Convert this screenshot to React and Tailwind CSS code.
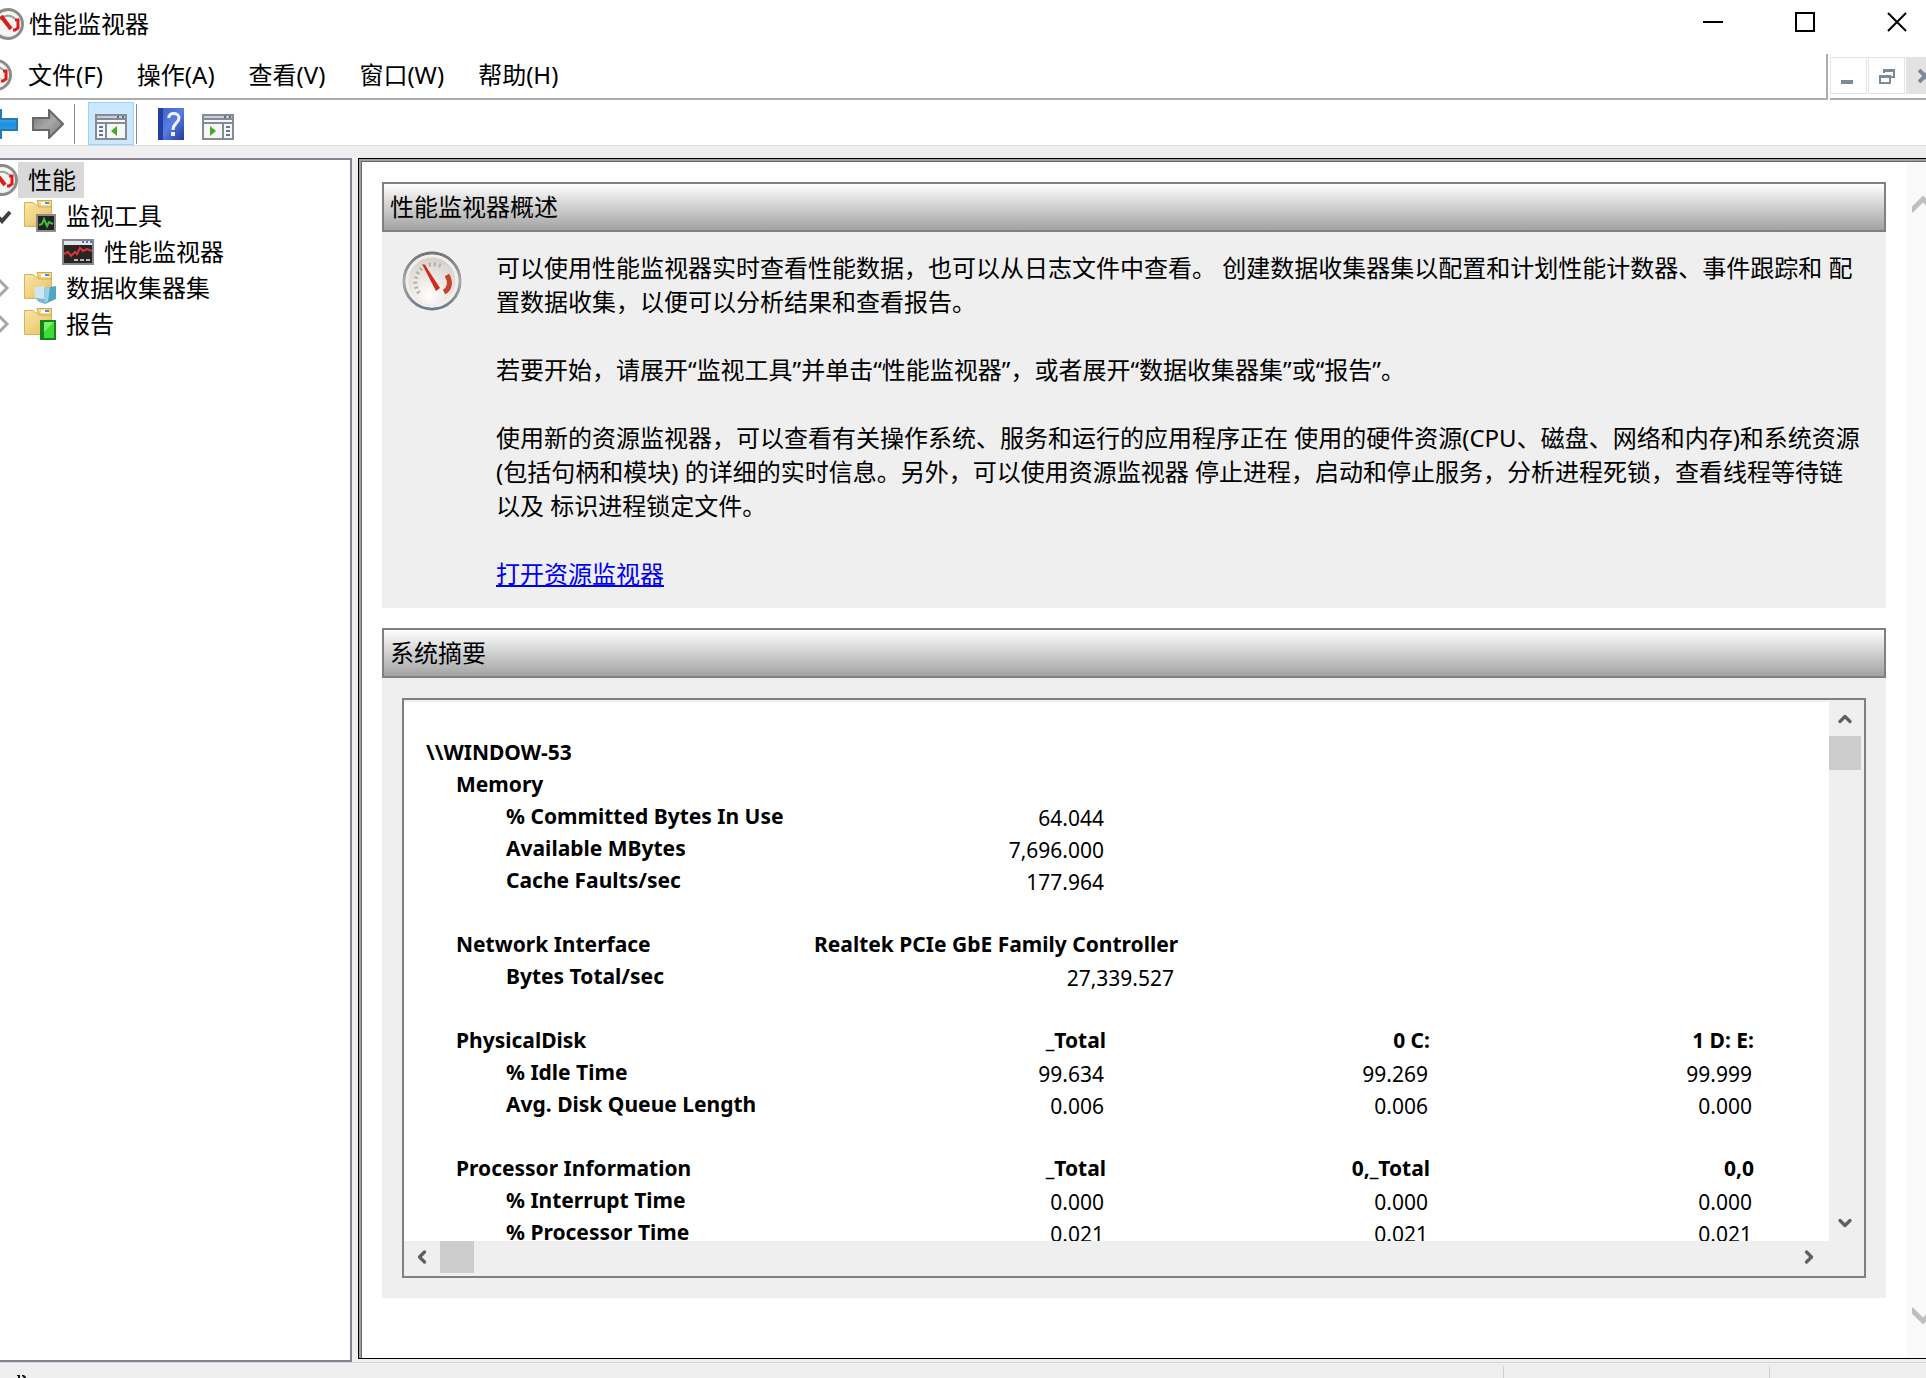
import { useState } from 'react';
import { ChevronDown, ChevronLeft, ChevronRight, ChevronUp } from 'lucide-react';

const MENUS = ['文件(F)', '操作(A)', '查看(V)', '窗口(W)', '帮助(H)'];

const GROUPS = [
  {
    name: 'Memory',
    cols: [],
    rows: [
      ['% Committed Bytes In Use', '64.044'],
      ['Available MBytes', '7,696.000'],
      ['Cache Faults/sec', '177.964'],
    ],
  },
  {
    name: 'PhysicalDisk',
    cols: ['_Total', '0 C:', '1 D: E:'],
    rows: [
      ['% Idle Time', '99.634', '99.269', '99.999'],
      ['Avg. Disk Queue Length', '0.006', '0.006', '0.000'],
    ],
  },
  {
    name: 'Processor Information',
    cols: ['_Total', '0,_Total', '0,0'],
    rows: [
      ['% Interrupt Time', '0.000', '0.000', '0.000'],
      ['% Processor Time', '0.021', '0.021', '0.021'],
    ],
  },
];

function Gauge({ className }) {
  return (
    <svg viewBox="0 0 60 60" className={className} aria-hidden="true">
      <defs>
        <radialGradient id="face" cx="0.45" cy="0.75" r="0.75">
          <stop offset="0" stopColor="#ffffff" />
          <stop offset="0.6" stopColor="#e4e0da" />
          <stop offset="1" stopColor="#cfcac4" />
        </radialGradient>
        <linearGradient id="rim" x1="0" y1="0" x2="0" y2="1">
          <stop offset="0" stopColor="#6f757c" />
          <stop offset="0.5" stopColor="#a9a9a6" />
          <stop offset="1" stopColor="#6d7a88" />
        </linearGradient>
      </defs>
      <circle cx="30" cy="30" r="28" fill="url(#face)" stroke="url(#rim)" strokeWidth="3" />
      <circle cx="30" cy="30" r="25" fill="none" stroke="#f1efeb" strokeWidth="3" />
      <path d="M17 42 A18 18 0 0 1 41 16" fill="none" stroke="#b3b0aa" strokeWidth="4" strokeDasharray="2 3" />
      <path d="M45 24 C49 31 48 38 42 41" fill="none" stroke="#c8402e" strokeWidth="5" />
      <path d="M20 13 L23 14 L38 37 L34 40 Z" fill="#d8281c" />
    </svg>
  );
}

// simplified drawing for the 32px sizes
function SmallGauge({ className }) {
  return (
    <svg viewBox="0 0 32 32" className={className} aria-hidden="true">
      <circle cx="16" cy="16" r="14.5" fill="#f6f5f2" stroke="#8b8b89" strokeWidth="3" />
      <path d="M8 12 C11 7 19 6 23 11" fill="none" stroke="#8fa79a" strokeWidth="2" />
      <path d="M9 8 L19 21" stroke="#dd1b1b" strokeWidth="4" />
      <path d="M23 12 H26 V20 L23 22 H21" fill="none" stroke="#dd1b1b" strokeWidth="3" />
    </svg>
  );
}

function Folder({ children }) {
  return (
    <svg viewBox="0 0 32 32" className="h-8 w-8 shrink-0" aria-hidden="true">
      <defs>
        <linearGradient id="folder" x1="0" y1="0" x2="1" y2="1">
          <stop offset="0" stopColor="#fbe7a6" />
          <stop offset="1" stopColor="#e6bd5e" />
        </linearGradient>
      </defs>
      <path d="M0.5 2.5 H9 L12 5 H27.5 V26.5 H0.5 Z" fill="url(#folder)" stroke="#d9b35c" />
      <path d="M13 0.5 H27.5 V7 H15 Z" fill="#f3d78a" stroke="#d3a950" />
      <rect x="17" y="2" width="8" height="3" fill="#ffffff" />
      <rect x="21" y="2" width="4" height="2" fill="#4d8fd0" />
      {children}
    </svg>
  );
}

function PaneIcon({ flip }) {
  return (
    <svg viewBox="0 0 32 26" className="h-[26px] w-8" aria-hidden="true">
      <rect x="1" y="1" width="30" height="24" fill="#f7f8f5" stroke="#848b95" strokeWidth="2" />
      <rect x="2" y="2" width="28" height="2" fill="#c9d0dc" />
      <path d="M1 5 H31 M1 9 H31" stroke="#848b95" strokeWidth="2" />
      <path d="M22 3 H24 M27 3 H29" stroke="#5c6b80" strokeWidth="2" />
      {flip ? (
        <>
          <path d="M21 9 V25" stroke="#848b95" strokeWidth="2" />
          <path d="M24 13 H28 M24 17 H28 M24 21 H28" stroke="#5877a8" strokeWidth="2" />
          <path d="M8 12 L14 17 L8 22 Z" fill="#3fae2a" />
        </>
      ) : (
        <>
          <path d="M11 9 V25" stroke="#848b95" strokeWidth="2" />
          <path d="M4 13 H8 M4 17 H8 M4 21 H8" stroke="#5877a8" strokeWidth="2" />
          <path d="M22 12 L16 17 L22 22 Z" fill="#3fae2a" />
        </>
      )}
    </svg>
  );
}

function SectionTitle({ children }) {
  return (
    <h2 className="flex h-[50px] items-center border-2 border-[#808080] bg-linear-to-b from-white to-[#a3a3a3] px-[6px] text-2xl">
      {children}
    </h2>
  );
}

function TreeItem({ selected, onSelect, toggle, icon, label, pad }) {
  return (
    <li className={`flex h-9 items-center ${pad}`}>
      {toggle}
      {icon}
      <button
        type="button"
        onClick={onSelect}
        className={`h-9 whitespace-nowrap pr-2 pl-[10px] text-2xl leading-9 ${selected ? 'bg-[#d9d9d9]' : ''}`}
      >
        {label}
      </button>
    </li>
  );
}

function SummaryTable() {
  return (
    <table className="w-[1412px] table-fixed border-collapse text-[21px] leading-8">
      <colgroup>
        <col className="w-[376px]" />
        <col className="w-[304px]" />
        <col className="w-[324px]" />
        <col className="w-[324px]" />
        <col />
      </colgroup>
      <tbody>
        <tr>
          <th colSpan={5} className="h-8 p-0 text-left">\\WINDOW-53</th>
        </tr>
        {GROUPS.map((g, i) => (
          <GroupRows key={g.name} group={g} network={i === 0} />
        ))}
      </tbody>
    </table>
  );
}

function GroupRows({ group, network }) {
  return (
    <>
      <tr>
        <th className="h-8 p-0 pl-[30px] text-left whitespace-nowrap">{group.name}</th>
        {group.cols.map((c) => (
          <th key={c} className="p-0 text-right">{c}</th>
        ))}
      </tr>
      {group.rows.map(([name, ...vals]) => (
        <tr key={name}>
          <th className="h-8 p-0 pl-20 text-left whitespace-nowrap">{name}</th>
          {vals.map((v, i) => (
            <td key={i} className="p-0 pt-1 pr-[2px] text-right leading-7">{v}</td>
          ))}
        </tr>
      ))}
      <tr><td colSpan={5} className="h-8 p-0" /></tr>
      {network && (
        <>
          <tr>
            <th className="h-8 p-0 pl-[30px] text-left whitespace-nowrap">Network Interface</th>
            <th colSpan={2} className="p-0 pl-3 text-left whitespace-nowrap">Realtek PCIe GbE Family Controller</th>
          </tr>
          <tr>
            <th className="h-8 p-0 pl-20 text-left whitespace-nowrap">Bytes Total/sec</th>
            <td colSpan={2} className="p-0 pt-1 pr-[256px] text-right leading-7">27,339.527</td>
          </tr>
          <tr><td colSpan={5} className="h-8 p-0" /></tr>
        </>
      )}
    </>
  );
}

export default function App() {
  const [selected, setSelected] = useState('root');
  const [open, setOpen] = useState(true);
  const item = (id) => ({ selected: selected === id, onSelect: () => setSelected(id) });

  return (
    <div className="flex h-screen flex-col overflow-hidden bg-[#efefef] font-['Noto_Sans','Noto_Sans_CJK_SC',sans-serif] text-black">
      <header className="flex h-12 shrink-0 items-center bg-white">
        <SmallGauge className="-ml-2 h-8 w-8 shrink-0" />
        <h1 className="ml-[5px] text-2xl leading-9">性能监视器</h1>
        <div className="ml-auto flex items-center gap-[72px] pr-[19px] pb-[4px]">
          <button type="button" aria-label="最小化" className="flex h-6 w-5 items-center">
            <span className="h-[2px] w-5 bg-black" />
          </button>
          <button type="button" aria-label="最大化" className="h-5 w-5 border-2 border-black" />
          <button type="button" aria-label="关闭" className="h-5 w-5">
            <svg viewBox="0 0 20 20" className="h-5 w-5"><path d="M1 1 L19 19 M19 1 L1 19" stroke="#000" strokeWidth="2" /></svg>
          </button>
        </div>
      </header>

      <nav className="flex h-[52px] shrink-0 bg-white">
        <div className="flex min-w-0 flex-1 items-center border-b-2 border-[#adadad] pt-1">
          <SmallGauge className="-ml-5 h-8 w-8 shrink-0" />
          <div className="ml-4 flex gap-[34px]">
            {MENUS.map((m) => (
              <button key={m} type="button" className="text-2xl leading-9 whitespace-nowrap">{m}</button>
            ))}
          </div>
        </div>
        <div className="mt-[6px] w-[2px] bg-[#adadad]" />
        <div className="ml-[2px] flex w-24 items-start gap-px overflow-hidden border-b-2 border-[#adadad] pt-[9px]">
          <button type="button" aria-label="最小化子窗口" className="flex h-[37px] w-[37px] shrink-0 items-end justify-center border border-[#e3e3e3] pr-1 pb-[9px]">
            <span className="h-1 w-3 bg-[#7b8a99]" />
          </button>
          <button type="button" aria-label="还原子窗口" className="flex h-[37px] w-[37px] shrink-0 items-center justify-center border border-[#e3e3e3]">
            <svg viewBox="0 0 16 16" className="h-4 w-4" fill="none" stroke="#7b8a99">
              <path d="M5 5 V2 H15 V9 H12" strokeWidth="2" />
              <path d="M4 1 H16 V4 H4 Z" fill="#7b8a99" stroke="none" />
              <rect x="1" y="8" width="10" height="7" strokeWidth="2" />
              <path d="M0 7 H12 V10 H0 Z" fill="#7b8a99" stroke="none" />
            </svg>
          </button>
          <button type="button" aria-label="关闭子窗口" className="flex h-[37px] w-[37px] shrink-0 items-center justify-center bg-[#e3e3e3]">
            <svg viewBox="0 0 14 14" className="h-[14px] w-[14px]"><path d="M1 1 L13 13 M13 1 L1 13" stroke="#7b8a99" strokeWidth="4" /></svg>
          </button>
        </div>
      </nav>

      <div className="flex h-[46px] shrink-0 items-center border-b border-[#dadada] bg-white pt-[2px]">
        <button type="button" aria-label="后退" className="-ml-4 w-[34px]">
          <svg viewBox="0 0 34 30" className="h-[30px] w-[34px]">
            <defs>
              <linearGradient id="back" x1="0" y1="0" x2="0" y2="1">
                <stop offset="0" stopColor="#8fd3f7" />
                <stop offset="0.5" stopColor="#1c8fe0" />
                <stop offset="1" stopColor="#3eb1f0" />
              </linearGradient>
            </defs>
            <path d="M2 15 L17 1 V10 H33 V21 H17 V29 Z" fill="url(#back)" stroke="#2878b8" strokeWidth="2" />
          </svg>
        </button>
        <button type="button" aria-label="前进" className="ml-[14px] w-8">
          <svg viewBox="0 0 32 30" className="h-[30px] w-8">
            <defs>
              <linearGradient id="fwd" x1="0" y1="0" x2="1" y2="1">
                <stop offset="0" stopColor="#6f6f6f" />
                <stop offset="0.5" stopColor="#a8a8a8" />
                <stop offset="1" stopColor="#777777" />
              </linearGradient>
            </defs>
            <path d="M1 9 H17 V1 L31 15 L17 29 V21 H1 Z" fill="url(#fwd)" stroke="#686868" strokeWidth="2" />
          </svg>
        </button>
        <span className="ml-[10px] h-10 w-px bg-[#848b95]" />
        <button type="button" aria-label="显示/隐藏控制台树" className="ml-[13px] flex h-[43px] w-[46px] items-center justify-center border border-[#99d1ff] bg-[#cce8ff] pt-[6px]">
          <PaneIcon />
        </button>
        <span className="ml-[2px] h-10 w-px bg-[#848b95]" />
        <button type="button" aria-label="帮助" className="ml-[21px]">
          <svg viewBox="0 0 26 32" className="h-8 w-[26px]">
            <defs>
              <linearGradient id="help" x1="0" y1="0" x2="1" y2="1">
                <stop offset="0" stopColor="#3a5bc4" />
                <stop offset="0.5" stopColor="#5a7ee0" />
                <stop offset="1" stopColor="#1f3a9c" />
              </linearGradient>
            </defs>
            <rect width="26" height="32" fill="url(#help)" />
            <rect width="5" height="32" fill="#243f9f" />
            <path d="M11 10 C10 4 21 4 21 10 C21 15 15 15 15 22" fill="none" stroke="#eef2ff" strokeWidth="3" />
            <rect x="13" y="24" width="4" height="4" fill="#eef2ff" />
          </svg>
        </button>
        <button type="button" aria-label="显示/隐藏操作窗格" className="ml-[18px] pt-[6px]">
          <PaneIcon flip />
        </button>
      </div>

      <div className="flex min-h-0 flex-1 gap-[6px] pt-3">
        <aside className="w-[352px] shrink-0 border-y-2 border-r-2 border-[#848290] bg-white pt-[2px]">
          <ul>
            <TreeItem {...item('root')} pad="" icon={<SmallGauge className="-ml-[14px] h-8 w-8 shrink-0" />} label="性能" />
            <TreeItem
              {...item('tools')}
              pad=""
              toggle={
                <button type="button" aria-label="展开监视工具" onClick={() => setOpen(!open)} className="-ml-[10px] w-[34px] shrink-0">
                  <svg viewBox="0 0 34 16" className="h-4 w-[34px]" fill="none"><path d="M4 5 L12 13 L20 4" stroke="#404040" strokeWidth="4" /></svg>
                </button>
              }
              icon={
                <Folder>
                  <rect x="13" y="15" width="18" height="16" fill="#262222" stroke="#8d8d8d" strokeWidth="2" />
                  <path d="M15 25 L18 24 L20 19 L23 26 L25 22 L29 24" fill="none" stroke="#35c43a" strokeWidth="2" />
                </Folder>
              }
              label="监视工具"
            />
            {open && (
              <TreeItem
                {...item('perfmon')}
                pad="pl-[62px]"
                icon={
                  <svg viewBox="0 0 32 26" className="h-[26px] w-8 shrink-0" aria-hidden="true">
                    <rect x="1" y="1" width="30" height="24" fill="#2b2423" stroke="#85888f" strokeWidth="2" />
                    <rect x="2" y="2" width="28" height="4" fill="#dfe6ee" />
                    <path d="M20 3 H22 M24 3 H26 M28 3 H30" stroke="#4a78b8" strokeWidth="2" />
                    <path d="M2 15 L6 13 L9 17 L13 13 L15 15 L18 9 L21 12 L25 10 L30 12" fill="none" stroke="#d5383c" strokeWidth="2" />
                    <path d="M12 21 H16 M18 21 H22 M24 21 H28" stroke="#b8b8b8" strokeWidth="2" />
                  </svg>
                }
                label="性能监视器"
              />
            )}
            <TreeItem
              {...item('sets')}
              pad=""
              toggle={
                <button type="button" aria-label="展开数据收集器集" className="w-6 shrink-0">
                  <svg viewBox="0 0 24 18" className="h-[18px] w-6" fill="none"><path d="M-1 1 L7 9 L-1 17" stroke="#a6a6a6" strokeWidth="3" /></svg>
                </button>
              }
              icon={
                <Folder>
                  <path d="M10 15 L20 14 L22 28 L11 26 Z" fill="#cfe6f3" />
                  <path d="M20 16 L32 14 V27 L21 32 Z" fill="#4ea6c6" />
                  <path d="M11 26 L21 27 V32 L15 30 Z" fill="#75b9d6" />
                  <path d="M20 16 L26 15 L24 29 L21 31 Z" fill="#9bd2e6" />
                </Folder>
              }
              label="数据收集器集"
            />
            <TreeItem
              {...item('reports')}
              pad=""
              toggle={
                <button type="button" aria-label="展开报告" className="w-6 shrink-0">
                  <svg viewBox="0 0 24 18" className="h-[18px] w-6" fill="none"><path d="M-1 1 L7 9 L-1 17" stroke="#a6a6a6" strokeWidth="3" /></svg>
                </button>
              }
              icon={
                <Folder>
                  <rect x="16" y="12" width="16" height="20" fill="#14851a" />
                  <rect x="20" y="14" width="10" height="16" fill="#3fdc38" />
                  <path d="M20 14 H30 L20 24 Z" fill="#7bf06a" />
                </Folder>
              }
              label="报告"
            />
          </ul>
        </aside>

        <div className="mb-[3px] flex min-w-0 flex-1 border-y border-l border-black bg-white">
          <div className="flex min-w-0 flex-1 border-t-2 border-l-2 border-[#a0a0a0]">
            <div className="flex min-w-0 flex-1 border-t border-l border-[#696969]">
              <main className="min-w-0 flex-1 px-5 pt-5">
                <section>
                  <SectionTitle>性能监视器概述</SectionTitle>
                  <div className="flex h-[376px] bg-[#efefef] pt-[19px] pl-5">
                    <Gauge className="h-[60px] w-[60px] shrink-0" />
                    <div className="ml-[34px] text-2xl leading-[34px] whitespace-nowrap">
                      <p>
                        可以使用性能监视器实时查看性能数据，也可以从日志文件中查看。 创建数据收集器集以配置和计划性能计数器、事件跟踪和 配<br />
                        置数据收集，以便可以分析结果和查看报告。
                      </p>
                      <p className="mt-[34px]">若要开始，请展开“监视工具”并单击“性能监视器”，或者展开“数据收集器集”或“报告”。</p>
                      <p className="mt-[34px]">
                        使用新的资源监视器，可以查看有关操作系统、服务和运行的应用程序正在 使用的硬件资源(CPU、磁盘、网络和内存)和系统资源<br />
                        (包括句柄和模块) 的详细的实时信息。另外，可以使用资源监视器 停止进程，启动和停止服务，分析进程死锁，查看线程等待链<br />
                        以及 标识进程锁定文件。
                      </p>
                      <p className="mt-[34px]">
                        <a href="#resmon" className="text-[#0000ee] underline">打开资源监视器</a>
                      </p>
                    </div>
                  </div>
                </section>

                <section className="mt-5">
                  <SectionTitle>系统摘要</SectionTitle>
                  <div className="bg-[#efefef] p-5">
                    <div className="flex h-[580px] flex-col border-2 border-[#808080] bg-[#efefef]">
                      <div className="flex min-h-0 flex-1">
                        <div className="mt-[2px] min-w-0 flex-1 overflow-hidden bg-white pt-[34px] pl-[22px]">
                          <SummaryTable />
                        </div>
                        <div className="flex w-[35px] flex-col items-start">
                          <button type="button" aria-label="向上滚动" className="flex h-9 w-8 items-center justify-center pt-[2px]">
                            <ChevronUp size={20} strokeWidth={4} color="#606060" />
                          </button>
                          <span className="h-[34px] w-8 bg-[#cdcdcd]" />
                          <button type="button" aria-label="向下滚动" className="mt-auto flex h-9 w-8 items-center justify-center">
                            <ChevronDown size={20} strokeWidth={4} color="#606060" />
                          </button>
                        </div>
                      </div>
                      <div className="flex h-[35px] items-start pr-[37px]">
                        <button type="button" aria-label="向左滚动" className="flex h-8 w-9 items-center justify-center">
                          <ChevronLeft size={20} strokeWidth={4} color="#606060" />
                        </button>
                        <span className="h-8 w-[34px] bg-[#cdcdcd]" />
                        <button type="button" aria-label="向右滚动" className="ml-auto flex h-8 w-9 items-center justify-center">
                          <ChevronRight size={20} strokeWidth={4} color="#606060" />
                        </button>
                      </div>
                    </div>
                  </div>
                </section>
              </main>
              <div className="flex w-5 shrink-0 flex-col justify-between overflow-hidden bg-[#f9f9f9] pt-8 pb-8 pl-[6px]">
                <button type="button" aria-label="页面向上滚动">
                  <svg viewBox="0 0 24 20" className="h-5 w-6" fill="none"><path d="M-1 17 L11 5 L23 17" stroke="#bfbfbf" strokeWidth="5" /></svg>
                </button>
                <button type="button" aria-label="页面向下滚动">
                  <svg viewBox="0 0 24 20" className="h-5 w-6" fill="none"><path d="M-1 3 L11 15 L23 3" stroke="#bfbfbf" strokeWidth="5" /></svg>
                </button>
              </div>
            </div>
          </div>
        </div>
      </div>

      <footer className="flex h-4 shrink-0 overflow-hidden border-t border-[#d7d7d7] pt-[3px]">
        <span className="flex flex-1 items-end pl-[17px]">
          <svg viewBox="0 0 10 3" className="h-[3px] w-[10px]" aria-hidden="true">
            <path d="M0 0 H3 V3 H1 V1 H0 Z M5 0 H7 L9 2 V3 H7 L5 1 Z" fill="#111" />
          </svg>
        </span>
        <span className="w-[266px] border-l border-[#d0d0d0]" />
        <span className="w-[157px] border-l border-[#d0d0d0]" />
      </footer>
    </div>
  );
}
